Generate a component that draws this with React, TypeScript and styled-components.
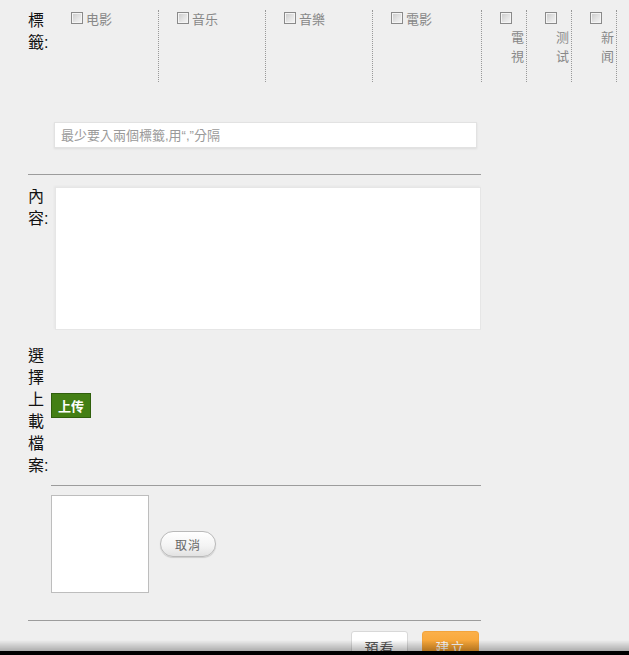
import React from "react";
import styled, { createGlobalStyle, css } from "styled-components";

const GlobalStyle = createGlobalStyle`
  html, body {
    margin: 0;
    padding: 0;
    background: #efefef;
  }
  body {
    font-family: "Liberation Sans", "Noto Sans CJK TC", "Noto Sans CJK SC", sans-serif;
  }
`;

const tags = [
  { label: "电影", width: 106 },
  { label: "音乐", width: 107 },
  { label: "音樂", width: 107 },
  { label: "電影", width: 109 },
  { label: "電視", width: 45, narrow: true },
  { label: "测试", width: 45, narrow: true },
  { label: "新闻", width: 45, narrow: true },
];

export default function App() {
  return (
    <>
      <GlobalStyle />
      <Page>
        <FieldRow>
          <Label>標籤:</Label>
          <TagList>
            {tags.map((t) => (
              <TagItem key={t.label} $width={t.width} $narrow={t.narrow}>
                <CheckBox />
                <TagText>{t.label}</TagText>
              </TagItem>
            ))}
          </TagList>
        </FieldRow>

        <TagInput placeholder="最少要入兩個標籤,用“,”分隔" />

        <Rule $top={26} />

        <FieldRow $top={11}>
          <Label>內容:</Label>
          <ContentBox />
        </FieldRow>

        <FieldRow $top={15} $center>
          <Label>選擇上載檔案:</Label>
          <UploadButton>上传</UploadButton>
        </FieldRow>

        <Rule $top={8} $indent={23} />

        <PreviewRow>
          <PreviewBox />
          <PillButton>取消</PillButton>
        </PreviewRow>

        <Rule $top={27} />

        <ActionBar>
          <ActionButton>預看</ActionButton>
          <ActionButton $primary>建立</ActionButton>
        </ActionBar>
      </Page>
      <BottomShade />
    </>
  );
}

const Page = styled.div`
  width: 453px;
  padding: 10px 0 40px 28px;
`;

const FieldRow = styled.div<{ $top?: number; $center?: boolean }>`
  display: flex;
  align-items: ${({ $center }) => ($center ? "center" : "flex-start")};
  margin-top: ${({ $top }) => $top ?? 0}px;
`;

const Label = styled.div`
  width: 22px;
  flex-shrink: 0;
  font-size: 16px;
  line-height: 22px;
  color: #111;
  word-break: break-all;
`;

const TagList = styled.div`
  display: flex;
  margin-left: 3px;
`;

const TagItem = styled.div<{ $width: number; $narrow?: boolean }>`
  box-sizing: border-box;
  width: ${({ $width }) => $width}px;
  height: 72px;
  padding: 0 2px 0 18px;
  border-right: 1px dotted #999;
  ${({ $narrow }) =>
    $narrow
      ? css`
          text-align: right;
        `
      : css`
          text-align: left;
        `}
`;

const CheckBox = styled.span`
  float: left;
  box-sizing: border-box;
  width: 12px;
  height: 12px;
  margin: 2px 3px 4px 0;
  border: 1px solid #8a8a8a;
  background: linear-gradient(135deg, #c9c9c9 0%, #e4e4e4 55%, #f6f6f6 100%);
  box-shadow: inset 0 0 0 1px #f4f4f4;
`;

const TagText = styled.span`
  font-size: 13px;
  line-height: 19px;
  color: #888;
`;

const TagInput = styled.input`
  display: block;
  box-sizing: border-box;
  width: 423px;
  height: 26px;
  margin: 40px 0 0 26px;
  padding: 0 6px;
  border: 1px solid #e2e2e2;
  box-shadow: 0 1px 2px rgba(0, 0, 0, 0.08);
  background: #fff;
  font-family: inherit;
  font-size: 13px;
  outline: none;
  &::placeholder {
    color: #9a9a9a;
  }
`;

const Rule = styled.div<{ $top: number; $indent?: number }>`
  height: 0;
  margin-top: ${({ $top }) => $top}px;
  margin-left: ${({ $indent }) => $indent ?? 0}px;
  border-top: 1px solid #9c9c9c;
`;

const ContentBox = styled.div`
  box-sizing: border-box;
  width: 427px;
  height: 143px;
  margin: 1px 0 0 5px;
  background: #fff;
  border: 1px solid #e6e6e6;
  box-shadow: -1px -1px 2px rgba(0, 0, 0, 0.04);
`;

const UploadButton = styled.button`
  box-sizing: border-box;
  width: 40px;
  height: 25px;
  margin: -12px 0 0 1px;
  padding: 0;
  background: #437f14;
  border: 1px solid #2f5f0c;
  color: #fff;
  font-family: inherit;
  font-size: 13px;
  font-weight: bold;
  cursor: pointer;
`;

const PreviewRow = styled.div`
  display: flex;
  align-items: center;
  gap: 11px;
  margin: 9px 0 0 23px;
`;

const PreviewBox = styled.div`
  box-sizing: border-box;
  width: 98px;
  height: 98px;
  background: #fff;
  border: 1px solid #bdbdbd;
`;

const PillButton = styled.button`
  box-sizing: border-box;
  width: 56px;
  height: 26px;
  padding: 0;
  border: 1px solid #b9b9b9;
  border-radius: 13px;
  background: linear-gradient(to bottom, #ffffff 0%, #f3f3f3 60%, #e2e2e2 100%);
  box-shadow: 0 1px 1px rgba(0, 0, 0, 0.15);
  color: #666;
  font-family: inherit;
  font-size: 12px;
  letter-spacing: 1px;
  cursor: pointer;
`;

const ActionBar = styled.div`
  display: flex;
  justify-content: flex-end;
  gap: 14px;
  margin: 10px 2px 0 0;
`;

const ActionButton = styled.button<{ $primary?: boolean }>`
  box-sizing: border-box;
  width: 57px;
  height: 28px;
  padding: 4px 0 0;
  border-radius: 3px;
  font-family: inherit;
  font-size: 14px;
  letter-spacing: 1px;
  cursor: pointer;
  ${({ $primary }) =>
    $primary
      ? css`
          border: 1px solid #f3a43c;
          background: linear-gradient(to bottom, #fbb04a, #f59a22);
          color: #fff;
        `
      : css`
          border: 1px solid #d8d8d8;
          background: #fff;
          color: #555;
        `}
`;

const BottomShade = styled.div`
  position: fixed;
  left: 0;
  right: 0;
  bottom: 0;
  height: 15px;
  background: linear-gradient(
    to bottom,
    rgba(0, 0, 0, 0) 0px,
    rgba(0, 0, 0, 0.28) 11px,
    #000 11px
  );
`;
